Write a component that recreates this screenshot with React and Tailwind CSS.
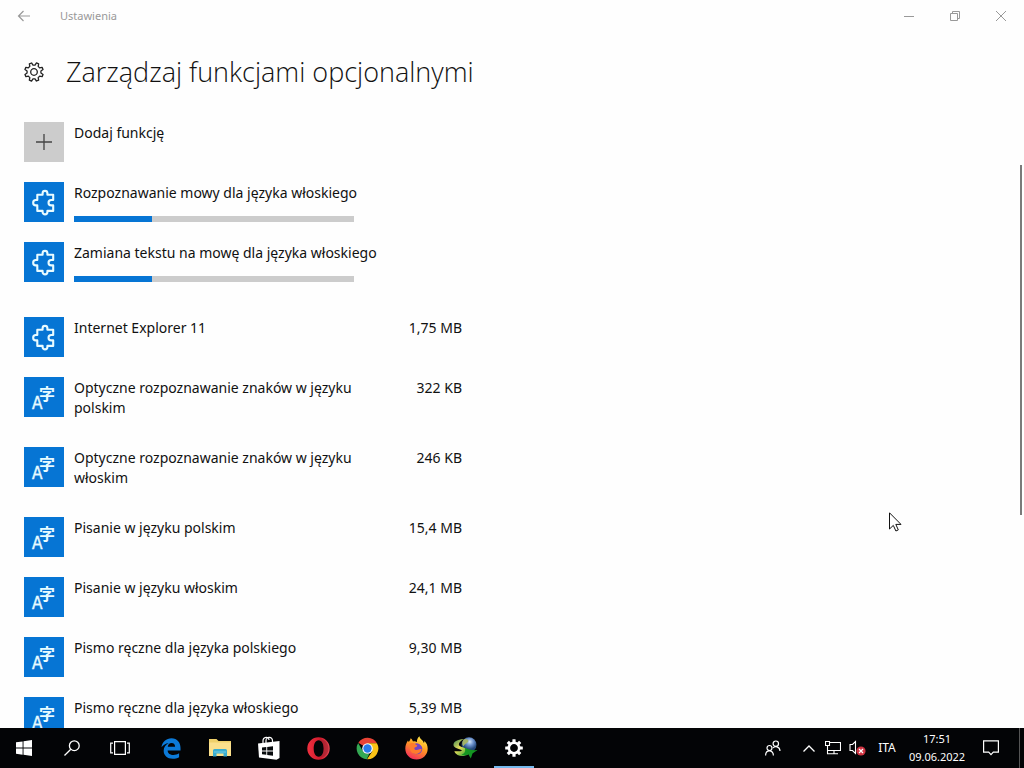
import React from "react";

const GEAR = Array.from({ length: 8 }, (_, i) => i * 45);

function PuzzleIcon() {
  return (
    <svg width="40" height="40" viewBox="0 0 40 40" fill="none" stroke="#e8fbff" strokeWidth="2.1" strokeLinejoin="round" aria-hidden="true">
      <path d="M13.3 12.8H18.6V11.3C18.6 8.1 23.4 8.1 23.4 11.3V12.8H29.2V18H27.3C23.6 18 23.6 23.4 27.3 23.4H29.2V28.9H23.4V30C23.4 33.2 18.6 33.2 18.6 30V28.9H13.3V23.4H11.8C8.3 23.4 8.3 18 11.8 18H13.3Z" />
    </svg>
  );
}

function LanguageIcon() {
  return (
    <svg width="40" height="40" viewBox="0 0 40 40" fill="#e8fbff" aria-hidden="true">
      <text x="15" y="23" fontSize="16" fontWeight="700" fontFamily="'Noto Sans CJK JP', sans-serif">字</text>
      <text x="8" y="32" fontSize="17" stroke="#e8fbff" strokeWidth=".4" fontFamily="'DejaVu Sans Condensed', 'DejaVu Sans', sans-serif">A</text>
    </svg>
  );
}

function Tile({ kind }) {
  return (
    <span className="size-10 shrink-0 bg-[#0675d4]">
      {kind === "puzzle" ? <PuzzleIcon /> : <LanguageIcon />}
    </span>
  );
}

const installing = [
  { name: "Rozpoznawanie mowy dla języka włoskiego", value: 28 },
  { name: "Zamiana tekstu na mowę dla języka włoskiego", value: 28 },
];

const features = [
  { name: "Internet Explorer 11", size: "1,75 MB", kind: "puzzle" },
  { name: "Optyczne rozpoznawanie znaków w języku polskim", size: "322 KB" },
  { name: "Optyczne rozpoznawanie znaków w języku włoskim", size: "246 KB" },
  { name: "Pisanie w języku polskim", size: "15,4 MB" },
  { name: "Pisanie w języku włoskim", size: "24,1 MB" },
  { name: "Pismo ręczne dla języka polskiego", size: "9,30 MB" },
  { name: "Pismo ręczne dla języka włoskiego", size: "5,39 MB" },
];

function TitleBar() {
  return (
    <header className="flex h-8 shrink-0 items-center text-[#999]">
      <button aria-label="Wstecz" className="flex h-8 w-12 items-center justify-center">
        <svg width="14" height="12" viewBox="0 0 14 12" fill="none" stroke="currentColor" strokeWidth="1.2">
          <path d="M13 6H1.5M6.5 1L1.5 6L6.5 11" />
        </svg>
      </button>
      <span className="flex-1 pl-3 text-[11px] leading-4">Ustawienia</span>
      <button aria-label="Minimalizuj" className="flex h-8 w-[46px] items-center justify-center">
        <svg width="10" height="10" viewBox="0 0 10 10" stroke="currentColor"><path d="M0 5.5H10" /></svg>
      </button>
      <button aria-label="Przywróć w dół" className="flex h-8 w-[46px] items-center justify-center">
        <svg width="10" height="10" viewBox="0 0 10 10" fill="none" stroke="currentColor">
          <path d="M.5 2.5H7.5V9.5H.5ZM2.5 2.5V.5H9.5V7.5H7.5" />
        </svg>
      </button>
      <button aria-label="Zamknij" className="flex h-8 w-[46px] items-center justify-center">
        <svg width="10" height="10" viewBox="0 0 10 10" stroke="currentColor"><path d="M0 0L10 10M10 0L0 10" /></svg>
      </button>
    </header>
  );
}

function OutlineGear() {
  return (
    <svg width="20" height="20" viewBox="-10 -10 20 20" fill="none" stroke="#222" strokeWidth="1.3" strokeLinejoin="round" aria-hidden="true">
      <path transform="rotate(22.5)" d="M-1.2-9.3H1.2L1.7-6.8L3.6-6L5.7-7.4L7.4-5.7L6-3.6L6.8-1.7L9.3-1.2V1.2L6.8 1.7L6 3.6L7.4 5.7L5.7 7.4L3.6 6L1.7 6.8L1.2 9.3H-1.2L-1.7 6.8L-3.6 6L-5.7 7.4L-7.4 5.7L-6 3.6L-6.8 1.7L-9.3 1.2V-1.2L-6.8-1.7L-6-3.6L-7.4-5.7L-5.7-7.4L-3.6-6L-1.7-6.8Z" />
      <circle r="3.3" />
    </svg>
  );
}

function StartIcon() {
  return (
    <svg width="16" height="16" viewBox="0 0 16 16" fill="#fff">
      <path d="M0 2.3L6.6 1.4V7.6H0ZM7.5 1.2L16 0V7.6H7.5ZM0 8.5H6.6V14.7L0 13.8ZM7.5 8.5H16V16L7.5 14.8Z" />
    </svg>
  );
}

function SearchIcon() {
  return (
    <svg width="16" height="16" viewBox="0 0 16 16" fill="none" stroke="#fff" strokeWidth="1.3">
      <circle cx="10.3" cy="5.7" r="4.9" />
      <path d="M6.8 9.2L.5 15.5" />
    </svg>
  );
}

function TaskViewIcon() {
  return (
    <svg width="20" height="14" viewBox="0 0 20 14" fill="none" stroke="#fff" strokeWidth="1.2">
      <path d="M4.6.7H15.4V13.3H4.6ZM3 2.2H.7V11.8H3M17 2.2H19.3V11.8H17" />
    </svg>
  );
}

function EdgeIcon() {
  return (
    <svg width="20" height="21" viewBox="0 0 21 22" fill="#0c7ad8">
      <path d="M.5 9.8C1.3 4 5.5.3 11 .3C17.2.3 20.5 5 20.5 10.5V13H7C7 16.2 9.8 17.7 13 17.7C15.2 17.7 17.3 17 19 16V20.2C17 21.3 14.6 21.8 12.3 21.8C6.5 21.8 2.8 18.4 2.8 13.4C2.8 9.8 4.8 6.9 8 5.5C5 5.6 2.3 7.3.5 9.8ZM7.1 9.2H14.8C14.8 6.6 13.5 5.2 11.1 5.2C8.9 5.2 7.4 6.8 7.1 9.2Z" />
    </svg>
  );
}

function ExplorerIcon() {
  return (
    <svg width="22" height="20" viewBox="0 0 22 20">
      <path d="M0 1H7.5L9.5 3H22V18H0Z" fill="#efd06a" />
      <path d="M0 4.5H22V18H0Z" fill="#fbe08c" />
      <path d="M4 18.5V12.5Q4 11 5.5 11H16.5Q18 11 18 12.5V18.5H14.5V15.5H7.5V18.5Z" fill="#38acd0" />
      <path d="M5 14H17" stroke="#74cfe5" />
    </svg>
  );
}

function StoreIcon() {
  return (
    <svg width="22" height="24" viewBox="0 0 22 24" fill="#fff">
      <path d="M5 8V5C5 .4 11 .2 11 4M8 7V4.6C8 0 14.5.5 14.5 5V7" fill="none" stroke="#fff" strokeWidth="1.2" />
      <path d="M0 7.5L21.5 5V22L18.5 23.8L1 21.5Z" />
      <path d="M4 11.5L8.3 11V14.5H4ZM9.2 10.9L15 10.2V14.5H9.2ZM4 15.4H8.3V18.8L4 18.3ZM9.2 15.4H15V19.7L9.2 18.9Z" fill="#080b0d" />
    </svg>
  );
}

function OperaIcon() {
  return (
    <svg width="23" height="23" viewBox="0 0 23 23">
      <defs>
        <linearGradient id="opera" x1="0" x2="1"><stop stopColor="#f0303f" /><stop offset=".6" stopColor="#cf192b" /><stop offset="1" stopColor="#e54853" /></linearGradient>
      </defs>
      <path fillRule="evenodd" fill="url(#opera)" d="M11.5.3A11.2 11.2 0 1 1 11.5 22.7A11.2 11.2 0 1 1 11.5.3ZM11.7 3.2C8.3 3.2 6.7 7.1 6.7 11.5S8.3 19.8 11.7 19.8S16.7 15.9 16.7 11.5S15.1 3.2 11.7 3.2Z" />
      <path d="M12 3C15 3.2 16.7 7 16.7 11.5S15 19.8 12 20C16 22 21.5 17.5 21.5 11.5S16.5 1 12 3Z" fill="#951f2b" opacity=".55" />
    </svg>
  );
}

function ChromeIcon() {
  return (
    <svg width="23" height="23" viewBox="0 0 48 48">
      <path d="M24 24L5 12A22.5 22.5 0 0 1 43.7 13H24Z" fill="#e94335" />
      <path d="M24 13H43.7A22.5 22.5 0 0 1 23 46.5L34 29.5Z" fill="#fbc316" />
      <path d="M4.5 12.5L14.5 29.5Q19 36 28 34.5L22.5 46.5A22.5 22.5 0 0 1 4.5 12.5Z" fill="#34a853" />
      <circle cx="24" cy="24" r="11" fill="#fff" />
      <circle cx="24" cy="24" r="8.7" fill="#287bea" />
    </svg>
  );
}

function FirefoxIcon() {
  return (
    <svg width="23" height="24" viewBox="0 0 23 24">
      <defs>
        <linearGradient id="fox" x1=".8" y1="0" x2=".3" y2="1"><stop stopColor="#fff44f" /><stop offset=".45" stopColor="#ff9a22" /><stop offset="1" stopColor="#f52b5b" /></linearGradient>
      </defs>
      <path fill="url(#fox)" d="M14.6.3C14.3 3 18.4 3.9 18.8 7C19.5 6.4 19.5 5.3 19.2 4.7C21.5 6.7 22.7 9.6 22.7 12.8C22.7 19 17.8 23.5 11.6 23.5C5.1 23.5.3 18.8.3 12.5C.3 9.5 1.4 6.6 3 4.5L3.7 6C4.6 5 5.4 3.7 5.7 2.2C7 3.2 7.5 4.3 8 5.4C10 5.1 10.6 5.3 12 6C11.7 3.7 12.8 1.5 14.6.3Z" />
      <circle cx="11.8" cy="12.8" r="5.5" fill="#7445c4" />
      <path d="M4.5 8C6.6 6.6 9.4 6.8 10.9 8.8C13 9 12.4 10.8 10.4 11.2C8.8 11.5 9.1 14 11.6 14C14 14 14.5 12.3 16.7 13.4C15.5 17.2 11.5 19 8.1 17.3C5 15.8 4.2 12.1 4.5 8Z" fill="#ff7b2c" />
      <path d="M12 6C16 5 19 8.5 18.5 12.5C17.6 9.7 15.5 9.6 14.8 8.2C14 7.4 13 7 12 6Z" fill="#ffbd2c" />
    </svg>
  );
}

function DownloadManagerIcon() {
  return (
    <svg width="25" height="22" viewBox="0 0 25 22">
      <defs>
        <radialGradient id="globe" cx=".55" cy=".3"><stop stopColor="#d5e7f8" /><stop offset=".5" stopColor="#6a8fca" /><stop offset="1" stopColor="#244879" /></radialGradient>
        <linearGradient id="swoosh" x1="0" y1="0" x2=".8" y2="1"><stop stopColor="#3f8a58" /><stop offset=".5" stopColor="#e6dc5a" /><stop offset="1" stopColor="#3aa536" /></linearGradient>
      </defs>
      <circle cx="16" cy="7.8" r="7.5" fill="url(#globe)" />
      <path d="M10 3.5C12 .8 15 2 15.5 4C14.5 6.5 12 6 10.5 9.5C9 8 8.8 5.5 10 3.5Z" fill="#a4b368" />
      <path d="M11 2.2C5 2 0 4.5.5 8.3C1 11.5 6 11.3 9 13.5C6.5 15 3.5 13.8 1.2 14.5C4 20 11.5 20.2 15.5 17L13.5 11.8C10.5 9.8 6.3 10 5.9 7.7C5.6 5.6 8 3.4 11 2.2Z" fill="url(#swoosh)" />
      <path d="M11.8 10.8C15 12.5 20 13.5 24.5 13L19.5 16.6L17.8 21.5L15.3 17.2C12.5 18.3 10.5 18.2 8.5 17.5C11.5 16.8 13 14.5 11.8 10.8Z" fill="#149622" />
    </svg>
  );
}

function SettingsIcon() {
  return (
    <svg width="18" height="18" viewBox="-9 -9 18 18">
      <g fill="#fff">
        {GEAR.map((a) => <rect key={a} x="-1.6" y="-8.8" width="3.2" height="4" rx=".4" transform={`rotate(${a})`} />)}
      </g>
      <circle r="5.2" fill="none" stroke="#fff" strokeWidth="2.6" />
    </svg>
  );
}

const apps = [
  ["Microsoft Edge", EdgeIcon],
  ["Eksplorator plików", ExplorerIcon],
  ["Sklep", StoreIcon],
  ["Opera", OperaIcon],
  ["Google Chrome", ChromeIcon],
  ["Firefox", FirefoxIcon],
  ["Internet Download Manager", DownloadManagerIcon],
];

function Taskbar() {
  const slot = "flex h-10 w-12 items-center justify-center";
  return (
    <footer className="flex h-10 shrink-0 items-center bg-[#030406] text-white">
      <button aria-label="Start" className={slot}><StartIcon /></button>
      <button aria-label="Wyszukaj" className={slot}><SearchIcon /></button>
      <button aria-label="Widok zadań" className={slot}><TaskViewIcon /></button>
      <nav className="ml-[3px] flex gap-px">
        {apps.map(([label, Icon]) => (
          <button key={label} aria-label={label} className={slot}><Icon /></button>
        ))}
        <button aria-label="Ustawienia" className="flex h-10 w-12 flex-col items-center">
          <span className="flex flex-1 items-center pt-0.5"><SettingsIcon /></span>
          <span className="h-0.5 w-10 bg-[#76b9ed]" />
        </button>
      </nav>
      <div className="ml-auto flex items-center">
        <button aria-label="Kontakty" className="flex h-10 w-13 items-center justify-center">
          <svg width="16" height="16" viewBox="0 0 16 16" fill="none" stroke="#fff" strokeWidth="1.2">
            <circle cx="10.8" cy="3.7" r="2.7" /><circle cx="4.5" cy="8" r="2.5" />
            <path d="M.6 15.5C.6 9.3 8.4 9.3 8.4 15.5M8 8C9.7 5.8 14.8 6.3 15 11" />
          </svg>
        </button>
        <button aria-label="Pokaż ukryte ikony" className="flex h-10 w-5 items-center justify-center">
          <svg width="12" height="7" viewBox="0 0 12 7" fill="none" stroke="#fff" strokeWidth="1.3"><path d="M.5 6.5L6 1L11.5 6.5" /></svg>
        </button>
        <button aria-label="Sieć" className="flex h-10 w-7 items-center justify-center">
          <svg width="16" height="14" viewBox="0 0 16 14" fill="none" stroke="#fff" strokeWidth="1.1">
            <path d="M5 1.5H15.5V9.5H2.5V6M9 9.5V12.8M5 12.8H13M.5.5H4.5V4.5H.5ZM2.5 4.5V12.8H5" />
          </svg>
        </button>
        <button aria-label="Głośność wyłączona" className="flex h-10 w-5 items-center justify-center">
          <svg width="17" height="16" viewBox="0 0 17 16" fill="none">
            <path d="M6.5 1.5V13.5L3.5 10.5H1V4.5H3.5Z" stroke="#fff" strokeWidth="1.1" />
            <circle cx="12" cy="11" r="4.6" fill="#cf3442" />
            <path d="M10 9L14 13M14 9L10 13" stroke="#fff" strokeWidth="1.2" />
          </svg>
        </button>
        <button className="h-10 w-10 text-xs">ITA</button>
        <button className="h-10 w-15 text-center text-[11px] leading-[18px]">
          <time className="block">17:51</time>
          <time className="block">09.06.2022</time>
        </button>
        <button aria-label="Centrum akcji" className={slot}>
          <svg width="16" height="16" viewBox="0 0 16 16" fill="none" stroke="#fff" strokeWidth="1.2">
            <path d="M.6.8H15.4V12.2H10.3L8 14.7L5.7 12.2H.6Z" />
          </svg>
        </button>
        <button aria-label="Pokaż pulpit" className="ml-1 h-10 w-[5px] border-l border-[#555]" />
      </div>
    </footer>
  );
}

export default function App() {
  return (
    <div className="relative flex h-screen flex-col overflow-hidden bg-[#fefefe] font-['Noto_Sans','Open_Sans',sans-serif] text-[#111]">
      <TitleBar />
      <div className="flex min-h-0 flex-1">
        <main className="min-w-0 flex-1 overflow-hidden pl-6">
          <div className="flex h-20 items-center gap-[22px]">
            <OutlineGear />
            <h1 className="font-['Open_Sans','Noto_Sans',sans-serif] text-[27px] leading-9 font-[350]">Zarządzaj funkcjami opcjonalnymi</h1>
          </div>
          <div className="max-w-[438px] pt-2.5 text-sm leading-5">
            <button className="flex h-15 w-full items-start gap-2.5 text-left">
              <span className="flex size-10 items-center justify-center bg-[#ccc]">
                <svg width="16" height="16" viewBox="0 0 16 16" stroke="#444" strokeWidth="1.3" aria-hidden="true"><path d="M8 0V16M0 8H16" /></svg>
              </span>
              <span className="pt-px">Dodaj funkcję</span>
            </button>
            <ul>
              {installing.map((item) => (
                <li key={item.name} className="flex h-15 gap-2.5">
                  <Tile kind="puzzle" />
                  <div className="pt-px">
                    <p className="whitespace-nowrap">{item.name}</p>
                    <div role="progressbar" aria-label={item.name} aria-valuenow={item.value} aria-valuemin="0" aria-valuemax="100" className="mt-[13px] h-1.5 w-[280px] bg-[#ccc]">
                      <div className="h-full bg-[#0675d4]" style={{ width: `${item.value}%` }} />
                    </div>
                  </div>
                </li>
              ))}
            </ul>
            <ul className="pt-[15px]">
              {features.map((item) => (
                <li key={item.name}>
                  <button className="flex min-h-15 w-full items-start gap-2.5 text-left">
                    <Tile kind={item.kind} />
                    <span className="w-[300px] pt-px pb-[29px]">{item.name}</span>
                    <span className="flex-1 pt-px text-right whitespace-nowrap">{item.size}</span>
                  </button>
                </li>
              ))}
            </ul>
          </div>
        </main>
        <div className="w-1 pt-[133px]" aria-hidden="true">
          <div className="h-[350px] w-0.5 bg-[#7a7a7a]" />
        </div>
      </div>
      <Taskbar />
      <svg className="pointer-events-none absolute top-[512px] left-[889px]" width="13" height="20" viewBox="0 0 13 20" fill="#fff" stroke="#111" aria-hidden="true">
        <path d="M.5.8V17L4.3 13.4L6.9 19L9.3 17.9L6.8 12.4H12Z" />
      </svg>
    </div>
  );
}
